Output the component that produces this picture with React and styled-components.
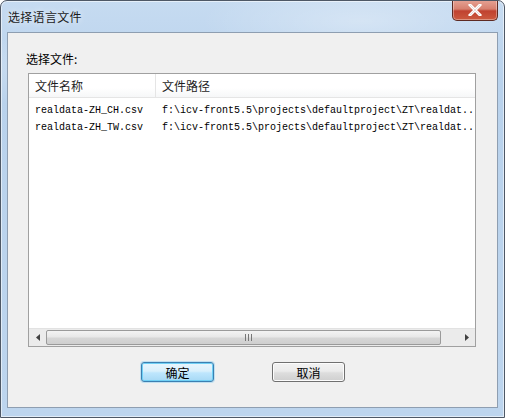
import React from 'react'
import styled, { createGlobalStyle } from 'styled-components'

const GlobalStyle = createGlobalStyle`
  html, body {
    margin: 0;
    padding: 0;
    background: #ffffff;
  }
  body {
    font-family: "Noto Sans CJK SC", "Liberation Sans", sans-serif;
  }
`

const Window = styled.div`
  box-sizing: border-box;
  width: 505px;
  height: 418px;
  display: flex;
  flex-direction: column;
  border: 1px solid #4e5866;
  border-radius: 7px 7px 0 0;
  background:
    radial-gradient(ellipse 180px 40px at 110px 70px, rgba(255, 255, 255, 0.35), transparent),
    radial-gradient(ellipse 160px 40px at 360px 20px, rgba(255, 255, 255, 0.3), transparent),
    linear-gradient(180deg, #c6dbf1 0%, #b9d2ec 20%, #bdd5ee 100%);
  box-shadow: inset 0 0 0 1px rgba(255, 255, 255, 0.55);
  overflow: hidden;
`

const TitleBar = styled.div`
  height: 31px;
  display: flex;
  align-items: flex-start;
  justify-content: space-between;
  padding: 0 6px 0 7px;
`

const Title = styled.span`
  margin-top: 8px;
  font-size: 12px;
  line-height: 16px;
  letter-spacing: 0.3px;
  color: #1b1b1b;
  text-shadow: 0 0 6px rgba(255, 255, 255, 0.9);
`

const CloseButton = styled.div`
  width: 44px;
  height: 20px;
  margin-top: -1px;
  display: flex;
  align-items: center;
  justify-content: center;
  border: 1px solid #5d2a22;
  border-top: none;
  border-radius: 0 0 5px 5px;
  background: linear-gradient(180deg, #e6a395 0%, #d7806f 45%, #c04230 55%, #cc5a3f 100%);
  box-shadow: inset 0 0 0 1px rgba(255, 255, 255, 0.35);
`

const Client = styled.div`
  box-sizing: border-box;
  flex: 1;
  margin: 0 6px 9px 6px;
  border: 1px solid #8e9eb1;
  background: #f0f0f0;
  display: flex;
  flex-direction: column;
  padding: 18px 20px 0 17px;
`

const Label = styled.div`
  font-size: 12px;
  line-height: 16px;
  color: #000;
  padding-left: 1px;
`

const ListBox = styled.div`
  box-sizing: border-box;
  margin-top: 6px;
  margin-left: 3px;
  width: 448px;
  height: 274px;
  border: 1px solid #a0a0a0;
  background: #ffffff;
  display: flex;
  flex-direction: column;
`

const HeaderRow = styled.div`
  height: 23px;
  display: flex;
  border-bottom: 1px solid #e5e5e5;
  background: linear-gradient(180deg, #ffffff 0%, #ffffff 60%, #f6f7f8 100%);
`

const HeaderCell = styled.div`
  box-sizing: border-box;
  width: ${p => p.$w};
  flex: ${p => (p.$grow ? 1 : 'none')};
  padding-left: 6px;
  font-size: 12px;
  line-height: 24px;
  color: #1e1e1e;
  border-right: ${p => (p.$grow ? 'none' : '1px solid #e5e5e5')};
`

const Rows = styled.div`
  flex: 1;
  padding-top: 4px;
`

const Row = styled.div`
  display: flex;
  height: 17px;
  align-items: center;
`

const Cell = styled.div`
  box-sizing: border-box;
  width: ${p => p.$w};
  flex: ${p => (p.$grow ? 1 : 'none')};
  padding-left: 6px;
  font-family: "Liberation Mono", monospace;
  font-size: 10px;
  color: #000;
  white-space: nowrap;
  overflow: hidden;
`

const ScrollBar = styled.div`
  height: 17px;
  display: flex;
  align-items: stretch;
  background: #ebebeb;
  border-top: 1px solid #e2e2e2;
`

const ArrowButton = styled.div`
  width: 17px;
  display: flex;
  align-items: center;
  justify-content: center;
`

const Thumb = styled.div`
  flex: 1;
  margin: 1px 0;
  border: 1px solid #9a9a9a;
  border-radius: 2px;
  background: linear-gradient(180deg, #f3f3f3 0%, #e8e8e8 45%, #d6d6d6 55%, #cfcfcf 100%);
  display: flex;
  align-items: center;
  justify-content: center;
  padding-left: 10px;
`

const Grip = styled.div`
  display: flex;
  gap: 2px;
  span {
    width: 1px;
    height: 7px;
    background: #777;
  }
`

const Spacer = styled.div`
  width: 17px;
`

const ButtonRow = styled.div`
  display: flex;
  gap: 58px;
  margin-top: 15px;
  padding-left: 116px;
`

const Button = styled.div`
  box-sizing: border-box;
  width: 73px;
  height: 20px;
  display: flex;
  align-items: center;
  justify-content: center;
  font-size: 12px;
  color: #000;
  border-radius: 3px;
  border: 1px solid ${p => (p.$default ? '#3c7fb1' : '#707070')};
  background: ${p =>
    p.$default
      ? 'linear-gradient(180deg, #eaf6fd 0%, #d9f0fc 45%, #bee6fd 55%, #a7d9f5 100%)'
      : 'linear-gradient(180deg, #f2f2f2 0%, #ebebeb 45%, #dddddd 55%, #cfcfcf 100%)'};
  box-shadow: ${p =>
    p.$default
      ? 'inset 0 0 0 1px #6fd0f5, 0 0 0 1px rgba(120, 200, 240, 0.4)'
      : 'inset 0 0 0 1px #fcfcfc'};
`

const files = [
  { name: 'realdata-ZH_CH.csv', path: 'f:\\icv-front5.5\\projects\\defaultproject\\ZT\\realdat..' },
  { name: 'realdata-ZH_TW.csv', path: 'f:\\icv-front5.5\\projects\\defaultproject\\ZT\\realdat..' },
]

const App = () => {
  return (
    <>
      <GlobalStyle />
      <Window>
        <TitleBar>
          <Title>选择语言文件</Title>
          <CloseButton>
            <svg width="14" height="12" viewBox="0 0 14 12">
              <path
                d="M2 1 L12 11 M12 1 L2 11"
                stroke="#ffffff"
                strokeWidth="3"
                strokeLinecap="square"
                fill="none"
              />
              <path
                d="M2 1 L12 11 M12 1 L2 11"
                stroke="#5a1d14"
                strokeOpacity="0.25"
                strokeWidth="0.6"
                fill="none"
              />
            </svg>
          </CloseButton>
        </TitleBar>
        <Client>
          <Label>选择文件:</Label>
          <ListBox>
            <HeaderRow>
              <HeaderCell $w="127px">文件名称</HeaderCell>
              <HeaderCell $grow>文件路径</HeaderCell>
            </HeaderRow>
            <Rows>
              {files.map(f => (
                <Row key={f.name}>
                  <Cell $w="127px">{f.name}</Cell>
                  <Cell $grow>{f.path}</Cell>
                </Row>
              ))}
            </Rows>
            <ScrollBar>
              <ArrowButton>
                <svg width="4" height="7" viewBox="0 0 4 7">
                  <path d="M4 0 L0 3.5 L4 7 Z" fill="#404040" />
                </svg>
              </ArrowButton>
              <Thumb>
                <Grip>
                  <span />
                  <span />
                  <span />
                </Grip>
              </Thumb>
              <Spacer />
              <ArrowButton>
                <svg width="4" height="7" viewBox="0 0 4 7">
                  <path d="M0 0 L4 3.5 L0 7 Z" fill="#404040" />
                </svg>
              </ArrowButton>
            </ScrollBar>
          </ListBox>
          <ButtonRow>
            <Button $default>确定</Button>
            <Button>取消</Button>
          </ButtonRow>
        </Client>
      </Window>
    </>
  )
}

export default App
